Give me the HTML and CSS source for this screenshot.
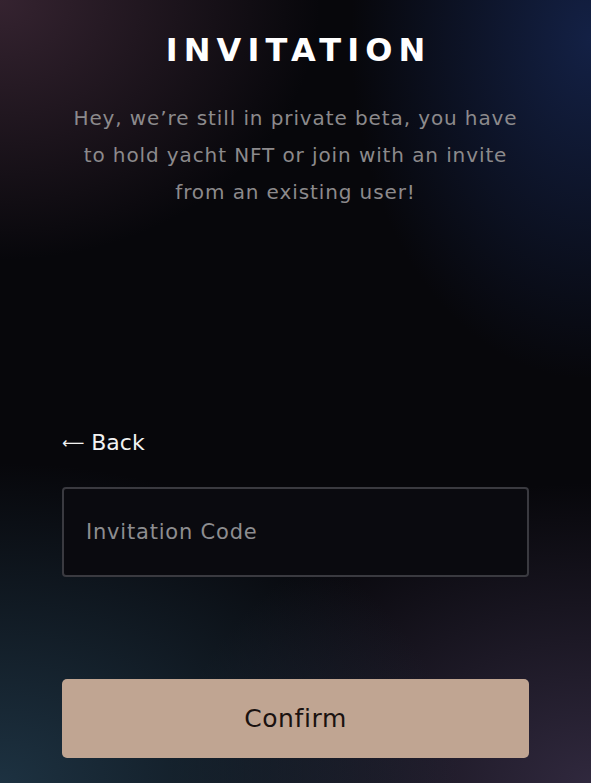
FILE: index.html
```html
<!DOCTYPE html>
<html lang="en">
<head>
<meta charset="utf-8">
<title>Invitation</title>
<link rel="stylesheet" href="styles.css">
</head>
<body>
<main class="screen">
  <h1 class="title">INVITATION</h1>
  <p class="intro">Hey, we’re still in private beta, you have<br>to hold yacht NFT or join with an invite<br>from an existing user!</p>
  <div class="form">
    <a class="back" href="#"><span class="arrow">⟵</span>Back</a>
    <div class="field"><span class="placeholder">Invitation Code</span></div>
    <button class="confirm" type="button">Confirm</button>
  </div>
</main>
</body>
</html>
```
FILE: styles.css
```css
* { box-sizing: border-box; }
html, body { margin: 0; padding: 0; }
body {
  width: 591px;
  height: 783px;
  overflow: hidden;
  font-family: "DejaVu Sans", "Open Sans", sans-serif;
  background:
    radial-gradient(ellipse 320px 260px at 0% 0%, rgba(58, 38, 52, 0.9), rgba(58, 38, 52, 0) 100%),
    radial-gradient(ellipse 240px 340px at 100% 5%, rgba(20, 34, 72, 0.95), rgba(20, 34, 72, 0) 100%),
    radial-gradient(ellipse 460px 320px at 0% 100%, rgba(30, 52, 68, 0.95), rgba(30, 52, 68, 0) 100%),
    radial-gradient(ellipse 420px 300px at 100% 100%, rgba(50, 42, 64, 0.95), rgba(50, 42, 64, 0) 100%),
    #07070b;
}
.screen {
  display: flex;
  flex-direction: column;
  align-items: center;
  padding: 28px 62px 0;
  height: 783px;
}
.title {
  margin: 0;
  color: #ffffff;
  font-size: 32px;
  font-weight: 700;
  letter-spacing: 6.1px;
  line-height: 44px;
  padding-left: 6.1px;
}
.intro {
  margin: 28px 0 0;
  width: 500px;
  text-align: center;
  color: #8c8a8c;
  font-size: 20px;
  letter-spacing: 0.9px;
  line-height: 37px;
  white-space: nowrap;
}
.form {
  align-self: stretch;
  display: flex;
  flex-direction: column;
  margin-top: 217px;
}
.back {
  color: #f2f2f2;
  text-decoration: none;
  font-size: 22px;
  line-height: 30px;
  display: flex;
  align-items: center;
  gap: 7px;
}
.arrow { font-size: 15.5px; }
.field {
  margin-top: 29px;
  height: 90px;
  border: 2px solid #3a3a40;
  border-radius: 4px;
  background: #0a0a0f;
  display: flex;
  align-items: center;
  padding: 0 22px;
}
.placeholder {
  color: #8d8d90;
  font-size: 21px;
  letter-spacing: 0.8px;
}
.confirm {
  margin-top: 102px;
  height: 79px;
  border: 0;
  border-radius: 5px;
  background: #c0a592;
  color: #1a1210;
  font-family: inherit;
  font-size: 25px;
  letter-spacing: 0.6px;
}
```
